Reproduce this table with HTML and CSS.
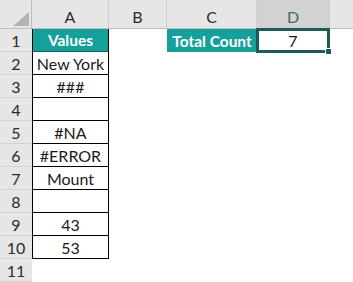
FILE: index.html
```html
<!DOCTYPE html>
<html>
<head>
<meta charset="utf-8">
<link rel="stylesheet" href="styles.css">
</head>
<body>
<div class="sheet">
  <div class="corner"><svg class="tri" width="16" height="14" viewBox="0 0 16 14"><polygon points="16,0 16,14 0,14" fill="#b4b4b4"/></svg></div>
  <div class="ch">A</div>
  <div class="ch">B</div>
  <div class="ch">C</div>
  <div class="ch sel">D</div>
  <div class="ch last"></div>

  <div class="rh">1</div>
  <div class="cell a teal top">Values</div>
  <div class="cell"></div>
  <div class="cell teal">Total Count</div>
  <div class="cell active">7<span class="handle"></span></div>
  <div class="cell"></div>

  <div class="rh">2</div><div class="cell a">New York</div><div class="cell"></div><div class="cell"></div><div class="cell"></div><div class="cell"></div>
  <div class="rh">3</div><div class="cell a">###</div><div class="cell"></div><div class="cell"></div><div class="cell"></div><div class="cell"></div>
  <div class="rh">4</div><div class="cell a"></div><div class="cell"></div><div class="cell"></div><div class="cell"></div><div class="cell"></div>
  <div class="rh">5</div><div class="cell a">#NA</div><div class="cell"></div><div class="cell"></div><div class="cell"></div><div class="cell"></div>
  <div class="rh">6</div><div class="cell a">#ERROR</div><div class="cell"></div><div class="cell"></div><div class="cell"></div><div class="cell"></div>
  <div class="rh">7</div><div class="cell a">Mount</div><div class="cell"></div><div class="cell"></div><div class="cell"></div><div class="cell"></div>
  <div class="rh">8</div><div class="cell a"></div><div class="cell"></div><div class="cell"></div><div class="cell"></div><div class="cell"></div>
  <div class="rh">9</div><div class="cell a">43</div><div class="cell"></div><div class="cell"></div><div class="cell"></div><div class="cell"></div>
  <div class="rh">10</div><div class="cell a">53</div><div class="cell"></div><div class="cell"></div><div class="cell"></div><div class="cell"></div>
  <div class="rh">11</div><div class="cell"></div><div class="cell"></div><div class="cell"></div><div class="cell"></div><div class="cell"></div>
</div>
</body>
</html>
```
FILE: styles.css
```css
html, body {
  margin: 0;
  padding: 0;
  background: #ffffff;
}
.sheet {
  display: grid;
  grid-template-columns: 32px 77px 58px 90px 73px 23px;
  grid-template-rows: 29px repeat(11, 23px);
  width: 353px;
  height: 282px;
  overflow: hidden;
  font-family: Lato, "Liberation Sans", Arial, sans-serif;
  font-size: 16px;
  color: #1a1a1a;
}
.sheet > div {
  box-sizing: border-box;
  display: flex;
  align-items: center;
  justify-content: center;
}
.corner {
  position: relative;
  background: #e6e6e6;
  border-right: 1px solid #bdbdbd;
  border-bottom: 1px solid #bdbdbd;
}
.tri {
  position: absolute;
  right: 2px;
  bottom: 2px;
}
.ch {
  background: #e6e6e6;
  border-right: 1px solid #cdcdcd;
  border-bottom: 1px solid #bdbdbd;
  padding-top: 4px;
  color: #2b2b2b;
}
.ch.sel {
  background: #d2d2d2;
  color: #3d6a63;
  border-bottom: 1px solid #9fb3ae;
}
.ch.last {
  border-right: none;
}
.rh {
  background: #e6e6e6;
  border-bottom: 1px solid #d3d3d3;
  color: #2b2b2b;
}
.cell {
  background: #ffffff;
}
.cell.a {
  border-left: 1px solid #000;
  border-right: 1px solid #000;
  border-bottom: 1px solid #000;
}
.cell.teal {
  background: #15a09c;
  color: #ffffff;
  font-weight: bold;
  font-size: 15.5px;
}
.cell.a.teal {
  border-bottom: 1px solid #0f5e5b;
}
.cell.active {
  position: relative;
  border: 3px solid #1f5a56;
  margin: -1px 0 -1px -1px;
}
.handle {
  position: absolute;
  right: -5px;
  bottom: -5px;
  width: 5px;
  height: 5px;
  background: #1f5a56;
  border: 1px solid #ffffff;
}
```
